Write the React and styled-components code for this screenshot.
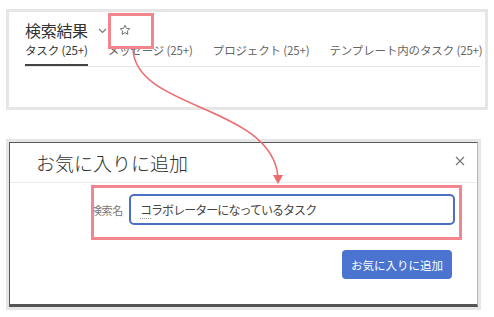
import React from "react";
import styled, { createGlobalStyle } from "styled-components";

const GlobalStyle = createGlobalStyle`
  body {
    margin: 0;
    background: #ffffff;
    font-family: "Noto Sans CJK JP", "Noto Sans", sans-serif;
  }
`;

const Page = styled.div`
  position: relative;
  width: 494px;
  height: 317px;
  box-sizing: border-box;
  padding: 9px 0 0 6px;
  display: flex;
  flex-direction: column;
  gap: 29px;
  overflow: hidden;
`;

const SearchPanel = styled.section`
  width: 482px;
  height: 101px;
  box-sizing: border-box;
  border: 3px solid #e6e6e6;
  padding: 6px 5px 0 16px;
`;

const Header = styled.div`
  display: flex;
  align-items: center;
  height: 24px;
  color: #333;
`;

const Title = styled.h1`
  margin: 0;
  font-size: 16px;
  font-weight: 400;
  line-height: 24px;
  letter-spacing: -0.3px;
`;

const Chevron = styled.span`
  display: flex;
  margin-left: 10px;
  margin-top: 2px;
`;

const StarWrap = styled.span`
  position: relative;
  display: flex;
  margin-left: 12px;
`;

const Highlight = styled.span`
  position: absolute;
  box-sizing: border-box;
  border: 3px solid #f2858d;
  pointer-events: none;
`;

const Tabs = styled.div`
  display: flex;
  gap: 20px;
  border-bottom: 1px solid #e6e6e6;
`;

const Tab = styled.div`
  font-size: 11.5px;
  line-height: 16px;
  letter-spacing: -0.15px;
  padding-bottom: 6px;
  color: ${(p) => (p.$active ? "#333" : "#666")};
  border-bottom: 2px solid ${(p) => (p.$active ? "#444" : "transparent")};
  white-space: nowrap;
`;

const DialogOuter = styled.section`
  width: 475px;
  height: 171px;
  box-sizing: border-box;
  border: 3px solid #e6e6e6;
`;

const DialogFrame = styled.div`
  height: 100%;
  box-sizing: border-box;
  border-top: 1px solid #5a5a5a;
  border-left: 1px solid #5a5a5a;
  border-right: 1px solid #b5b5b5;
  border-bottom: 3px solid #555;
  display: flex;
  flex-direction: column;
`;

const DialogHeader = styled.div`
  display: flex;
  align-items: center;
  justify-content: space-between;
  height: 39px;
  padding: 0 12px 0 26px;
  border-bottom: 1px solid #ebebeb;
`;

const DialogTitle = styled.h2`
  margin: 0;
  font-size: 19px;
  font-weight: 300;
  color: #333;
`;

const CloseButton = styled.span`
  display: flex;
  margin-top: -3px;
`;

const DialogBody = styled.div`
  display: flex;
  flex-direction: column;
  padding: 11px 22px 0 0;
`;

const FormRow = styled.div`
  position: relative;
  display: flex;
  align-items: center;
  justify-content: flex-end;
  gap: 6px;
`;

const Label = styled.label`
  font-size: 11px;
  letter-spacing: -0.3px;
  color: #777;
`;

const InputBox = styled.div`
  width: 326px;
  height: 31px;
  box-sizing: border-box;
  border: 2px solid #4a6fc4;
  border-radius: 5px;
  padding-left: 9px;
  display: flex;
  align-items: center;
  font-size: 12px;
  letter-spacing: -0.95px;
  color: #444;
`;

const ImeMark = styled.span`
  border-bottom: 1px dotted #999;
`;

const Actions = styled.div`
  display: flex;
  justify-content: flex-end;
  margin-top: 25px;
  padding-right: 3px;
`;

const PrimaryButton = styled.button`
  width: 110px;
  height: 29px;
  border: none;
  border-radius: 4px;
  background: #4a74d0;
  color: #fff;
  font-family: inherit;
  font-size: 11.5px;
  padding: 0;
`;

const ArrowLayer = styled.svg`
  position: absolute;
  left: 0;
  top: 0;
  pointer-events: none;
`;

export default function App() {
  return (
    <>
      <GlobalStyle />
      <Page>
        <SearchPanel>
          <Header>
            <Title>検索結果</Title>
            <Chevron>
              <svg width="9" height="6" viewBox="0 0 9 6">
                <path d="M1 1l3.5 3.5L8 1" fill="none" stroke="#777" strokeWidth="1.1" />
              </svg>
            </Chevron>
            <StarWrap>
              <svg width="12" height="12" viewBox="0 0 24 24">
                <path
                  d="M12 2.5l2.9 6.1 6.6.8-4.9 4.6 1.3 6.6L12 17.3l-5.9 3.3 1.3-6.6-4.9-4.6 6.6-.8z"
                  fill="none"
                  stroke="#666"
                  strokeWidth="1.8"
                  strokeLinejoin="round"
                />
              </svg>
              <Highlight style={{ left: -11, top: -11, width: 46, height: 36 }} />
            </StarWrap>
          </Header>
          <Tabs>
            <Tab $active>タスク (25+)</Tab>
            <Tab>メッセージ (25+)</Tab>
            <Tab>プロジェクト (25+)</Tab>
            <Tab>テンプレート内のタスク (25+)</Tab>
          </Tabs>
        </SearchPanel>

        <DialogOuter>
          <DialogFrame>
            <DialogHeader>
              <DialogTitle>お気に入りに追加</DialogTitle>
              <CloseButton>
                <svg width="10" height="10" viewBox="0 0 10 10">
                  <path d="M1 1l8 8M9 1l-8 8" stroke="#777" strokeWidth="1.2" />
                </svg>
              </CloseButton>
            </DialogHeader>
            <DialogBody>
              <FormRow>
                <Label>検索名</Label>
                <InputBox>
                  <ImeMark>コ</ImeMark>ラボレーターになっているタスク
                </InputBox>
                <Highlight style={{ left: 81, top: -9, width: 371, height: 55 }} />
              </FormRow>
              <Actions>
                <PrimaryButton>お気に入りに追加</PrimaryButton>
              </Actions>
            </DialogBody>
          </DialogFrame>
        </DialogOuter>

        <ArrowLayer width="494" height="317" viewBox="0 0 494 317">
          <path
            d="M133 49 C 135 110, 272 105, 278 177"
            fill="none"
            stroke="#ec6b6f"
            strokeWidth="1.5"
          />
          <polygon points="273,175 283,175 278,184" fill="#ec6b6f" />
        </ArrowLayer>
      </Page>
    </>
  );
}
